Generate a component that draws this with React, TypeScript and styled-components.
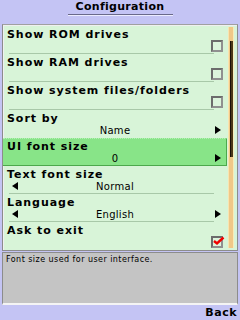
import React, { useState } from 'react';
import styled, { createGlobalStyle } from 'styled-components';

const GlobalStyle = createGlobalStyle`
  html, body {
    margin: 0;
    padding: 0;
    background-color: #c4c4f4;
  }
  * { box-sizing: border-box; }
`;

const Screen = styled.div`
  width: 240px;
  height: 320px;
  display: flex;
  flex-direction: column;
  background-color: #c4c4f4;
  font-family: "DejaVu Sans", Verdana, sans-serif;
  color: #000;
  overflow: hidden;
`;

const TitleBar = styled.header`
  height: 24px;
  display: flex;
  justify-content: center;
  align-items: flex-start;
`;

const Title = styled.h1`
  margin: 0;
  padding: 0 6px 1px 6px;
  font-size: 11px;
  line-height: 13px;
  font-weight: bold;
  letter-spacing: 0.3px;
  border-bottom: 1px solid #6a6a8a;
  box-shadow: 0 1px 0 #ececff;
  width: 105px;
  text-align: center;
`;

const ListPanel = styled.div`
  margin: 0 2px;
  height: 227px;
  display: flex;
  background-color: #d8f4d8;
  border: 1px solid #8c8c8c;
  border-top-color: #a0a0a0;
  box-shadow: inset 1px 1px 0 #f0f0f0;
`;

const Rows = styled.div`
  flex: 1;
  display: flex;
  flex-direction: column;
  padding-top: 1px;
`;

const Row = styled.div<{ $selected?: boolean }>`
  height: 28px;
  position: relative;
  display: flex;
  flex-direction: column;
  padding: 1px 3px 0 4px;
  background-color: ${p => (p.$selected ? '#88e488' : 'transparent')};
  border-right: 1px solid ${p => (p.$selected ? '#4ca84c' : 'transparent')};
  border-bottom: 1px solid ${p => (p.$selected ? '#4ca84c' : 'transparent')};
  border-top: 1px dotted ${p => (p.$selected ? '#b4f0b4' : 'transparent')};
  margin-right: 1px;
`;

const Separator = styled.div`
  position: absolute;
  left: 6px;
  right: 12px;
  bottom: -1px;
  height: 1px;
  background-color: #a8c8a8;
`;

const Label = styled.div`
  font-size: 11px;
  line-height: 13px;
  font-weight: bold;
  letter-spacing: 0.95px;
  white-space: nowrap;
`;

const Control = styled.div`
  height: 12px;
  display: flex;
  align-items: center;
  justify-content: flex-end;
  position: relative;
`;

const Value = styled.div`
  position: absolute;
  left: 0;
  right: 0;
  top: -1px;
  text-align: center;
  font-size: 10px;
  line-height: 13px;
  letter-spacing: 0.3px;
`;

const Arrow = styled.span<{ $left?: boolean }>`
  width: 0;
  height: 0;
  border-top: 4px solid transparent;
  border-bottom: 4px solid transparent;
  ${p => (p.$left ? 'border-right: 6px solid #000;' : 'border-left: 6px solid #000;')}
  position: absolute;
  top: 1px;
  ${p => (p.$left ? 'left: 5px;' : 'right: 2px;')}
`;

const Box = styled.span`
  width: 12px;
  height: 12px;
  border: 2px solid #6c6c6c;
  border-right-color: #909090;
  border-bottom-color: #909090;
  background-color: #dcf4dc;
  position: relative;
  top: -1px;
`;

const Check = styled.svg`
  position: absolute;
  left: 0;
  top: -2px;
`;

const ScrollTrack = styled.div`
  width: 6px;
  margin: 2px 3px 2px 0;
  background-color: #f0c888;
  border-left: 1px solid #f8e4b0;
  border-right: 1px solid #f8ecb8;
  display: flex;
  flex-direction: column;
`;

const ScrollThumb = styled.div<{ $top: number; $size: number }>`
  margin-top: ${p => p.$top}px;
  height: ${p => p.$size}px;
  width: 3px;
  margin-left: 1px;
  background-color: #4a3818;
  border-left: 1px solid #1a1008;
`;

const DescPanel = styled.div`
  margin: 1px 2px 0 2px;
  height: 53px;
  background-color: #c4c4c4;
  border: 1px solid #8c8c8c;
  border-bottom: 2px solid #f4f4f4;
  padding: 2px 3px;
  font-size: 8px;
  line-height: 10px;
  letter-spacing: 0.45px;
`;

const SoftKeys = styled.footer`
  flex: 1;
  display: flex;
  justify-content: flex-end;
  align-items: center;
  padding: 0 3px 0 0;
`;

const SoftKey = styled.span`
  font-size: 11px;
  font-weight: bold;
  letter-spacing: 0.5px;
`;

type Item =
  | { kind: 'check'; label: string; checked: boolean }
  | { kind: 'choice'; label: string; value: string; left: boolean; right: boolean };

const items: Item[] = [
  { kind: 'check', label: 'Show ROM drives', checked: false },
  { kind: 'check', label: 'Show RAM drives', checked: false },
  { kind: 'check', label: 'Show system files/folders', checked: false },
  { kind: 'choice', label: 'Sort by', value: 'Name', left: false, right: true },
  { kind: 'choice', label: 'UI font size', value: '0', left: false, right: true },
  { kind: 'choice', label: 'Text font size', value: 'Normal', left: true, right: false },
  { kind: 'choice', label: 'Language', value: 'English', left: true, right: true },
  { kind: 'check', label: 'Ask to exit', checked: true },
];

const App: React.FC = () => {
  const [selected] = useState(4);

  return (
    <Screen>
      <GlobalStyle />
      <TitleBar>
        <Title>Configuration</Title>
      </TitleBar>
      <ListPanel>
        <Rows>
          {items.map((item, i) => (
            <Row key={item.label} $selected={i === selected}>
              <Label>{item.label}</Label>
              {item.kind === 'check' ? (
                <Control>
                  <Box>
                    {item.checked && (
                      <Check width="12" height="10" viewBox="0 0 12 10">
                        <path d="M1 5 L4 7.5 L10.5 1.5" stroke="#f00000" strokeWidth="2.4" fill="none" />
                      </Check>
                    )}
                  </Box>
                </Control>
              ) : (
                <Control>
                  {item.left && <Arrow $left />}
                  <Value>{item.value}</Value>
                  {item.right && <Arrow />}
                </Control>
              )}
              {i !== selected && i !== selected - 1 && i !== items.length - 1 && <Separator />}
            </Row>
          ))}
        </Rows>
        <ScrollTrack>
          <ScrollThumb $top={14} $size={116} />
        </ScrollTrack>
      </ListPanel>
      <DescPanel>Font size used for user interface.</DescPanel>
      <SoftKeys>
        <SoftKey>Back</SoftKey>
      </SoftKeys>
    </Screen>
  );
};

export default App;
